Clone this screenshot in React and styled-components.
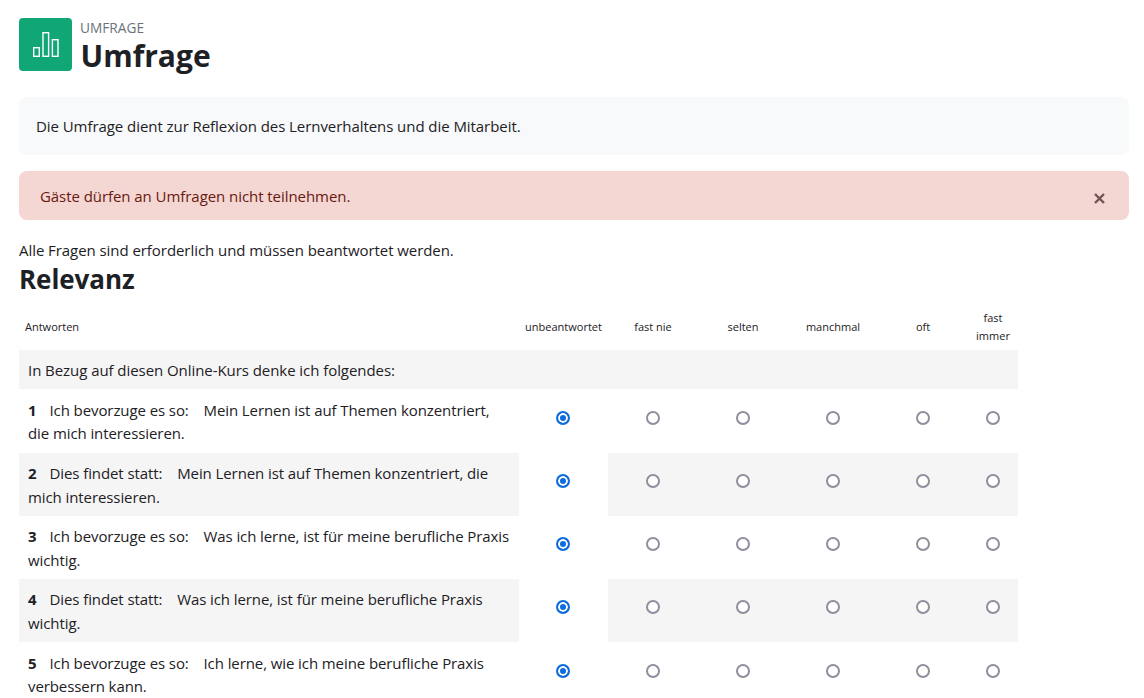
import React from "react";
import styled, { createGlobalStyle } from "styled-components";

const Global = createGlobalStyle`
  html, body { margin: 0; padding: 0; height: 100%; overflow: hidden; background: #fff; }
  body { font-family: "Open Sans", "Noto Sans", sans-serif; color: #1d2125; font-size: 15px; letter-spacing: -0.06px; }
  * { box-sizing: border-box; }
`;
const Page = styled.div`padding: 18px 15px 0 19px;`;
const Header = styled.header`display: flex; align-items: flex-start; gap: 8px; height: 79px;`;
const IconTile = styled.div`
  width: 53px; height: 53px; border-radius: 4px; background: #11a676;
  display: flex; align-items: center; justify-content: center;
`;
const Titles = styled.div`display: flex; flex-direction: column; padding-top: 2px;`;
const Kicker = styled.div`font-size: 13.7px; line-height: 16px; color: #6a737b; text-transform: uppercase; letter-spacing: 0;`;
const Title = styled.h1`margin: 0; padding-left: 0.5px; font-size: 30px; line-height: 40px; font-weight: 700; letter-spacing: 0;`;
const Intro = styled.div`
  height: 58px; background: #f8f9fa; border-radius: 8px; padding: 0 17px;
  display: flex; align-items: center;
`;
const Alert = styled.div`
  margin-top: 16px; height: 49px; background: #f4d6d2; border-radius: 8px; color: #691911;
  padding: 0 21px; display: flex; align-items: center; position: relative;
`;
const Close = styled.svg`position: absolute; right: 24px; top: 22px;`;
const Note = styled.p`margin: 20px 0 0; line-height: 20px;`;
const Section = styled.h2`margin: 0; font-size: 26px; line-height: 38px; font-weight: 700; letter-spacing: -0.05px;`;
const Table = styled.table`
  margin-top: 6px; width: 999px; table-layout: fixed; border-collapse: collapse;
`;
const HeadCell = styled.th`
  height: 46px; padding: 0; font-weight: 400; font-size: 11px; line-height: 18px; text-align: center; letter-spacing: 0;
  &:first-child { text-align: left; padding-left: 6px; }
`;
const GroupCell = styled.td`
  height: 39px; background: #f5f5f5; padding: 0 9px;
`;
const Row = styled.tr`height: ${p => p.$h}px;`;
const Question = styled.td`
  padding: 2px 8px 0 9px; line-height: 23.5px; letter-spacing: -0.09px;
  background: ${p => (p.$shade ? "#f5f5f5" : "#fff")};
`;
const Num = styled.b`margin-right: 13px;`;
const Sep = styled.span`margin-right: 11px;`;
const Cell = styled.td`
  text-align: center; padding: 0 ${p => (p.$first ? 1 : 0)}px ${p => p.$pad}px 0; line-height: 0;
  background: ${p => (p.$shade ? "#f5f5f5" : "#fff")};
`;
const Radio = styled.span`
  display: inline-block; width: 14px; height: 14px; border-radius: 50%;
  border: 2px solid ${p => (p.$on ? "#0f6cdc" : "#8f8f9d")};
  background: ${p => (p.$on ? "#0f6cdc" : "#fff")};
  box-shadow: ${p => (p.$on ? "inset 0 0 0 2px #fff" : "none")};
`;

const cols = [
  [500, "Antworten"], [89, "unbeantwortet"], [90, "fast nie"], [90, "selten"],
  [90, "manchmal"], [90, "oft"], [50, <>fast<br />immer</>],
];
const rows = [
  ["Ich bevorzuge es so:", "Mein Lernen ist auf Themen konzentriert, die mich interessieren.", 64],
  ["Dies findet statt:", "Mein Lernen ist auf Themen konzentriert, die mich interessieren.", 63],
  ["Ich bevorzuge es so:", "Was ich lerne, ist für meine berufliche Praxis wichtig.", 63],
  ["Dies findet statt:", "Was ich lerne, ist für meine berufliche Praxis wichtig.", 63],
  ["Ich bevorzuge es so:", "Ich lerne, wie ich meine berufliche Praxis verbessern kann.", 64],
];

export default function App() {
  return (
    <Page>
      <Global />
      <Header>
        <IconTile>
          <svg width="26" height="25" viewBox="0 0 26 25" fill="none" stroke="#fff" strokeWidth="1.4">
            <rect x="0.7" y="15.7" width="5.6" height="8.6" />
            <rect x="10" y="0.7" width="5.6" height="23.6" />
            <rect x="19.4" y="7.7" width="5.6" height="16.6" />
          </svg>
        </IconTile>
        <Titles>
          <Kicker>Umfrage</Kicker>
          <Title>Umfrage</Title>
        </Titles>
      </Header>
      <Intro>Die Umfrage dient zur Reflexion des Lernverhaltens und die Mitarbeit.</Intro>
      <Alert>
        Gäste dürfen an Umfragen nicht teilnehmen.
        <Close width="11" height="11" viewBox="0 0 11 11" stroke="#6f5553" strokeWidth="2.4">
          <path d="M1 1l9 9M10 1l-9 9" />
        </Close>
      </Alert>
      <Note>Alle Fragen sind erforderlich und müssen beantwortet werden.</Note>
      <Section>Relevanz</Section>
      <Table>
        <colgroup>{cols.map(([w], i) => <col key={i} width={w} />)}</colgroup>
        <thead>
          <tr>{cols.map(([, t], i) => <HeadCell key={i}>{t}</HeadCell>)}</tr>
        </thead>
        <tbody>
          <tr><GroupCell colSpan={7}>In Bezug auf diesen Online-Kurs denke ich folgendes:</GroupCell></tr>
          {rows.map(([a, b, h], i) => {
            const shade = i % 2 === 1;
            return (
              <Row key={i} $h={h}>
                <Question $shade={shade}><Num>{i + 1}</Num><Sep>{a}</Sep> {b}</Question>
                {[0, 1, 2, 3, 4, 5].map(c => (
                  <Cell key={c} $first={c === 0} $pad={h === 64 ? 6 : 7} $shade={shade && c > 0}><Radio $on={c === 0} /></Cell>
                ))}
              </Row>
            );
          })}
        </tbody>
      </Table>
    </Page>
  );
}
